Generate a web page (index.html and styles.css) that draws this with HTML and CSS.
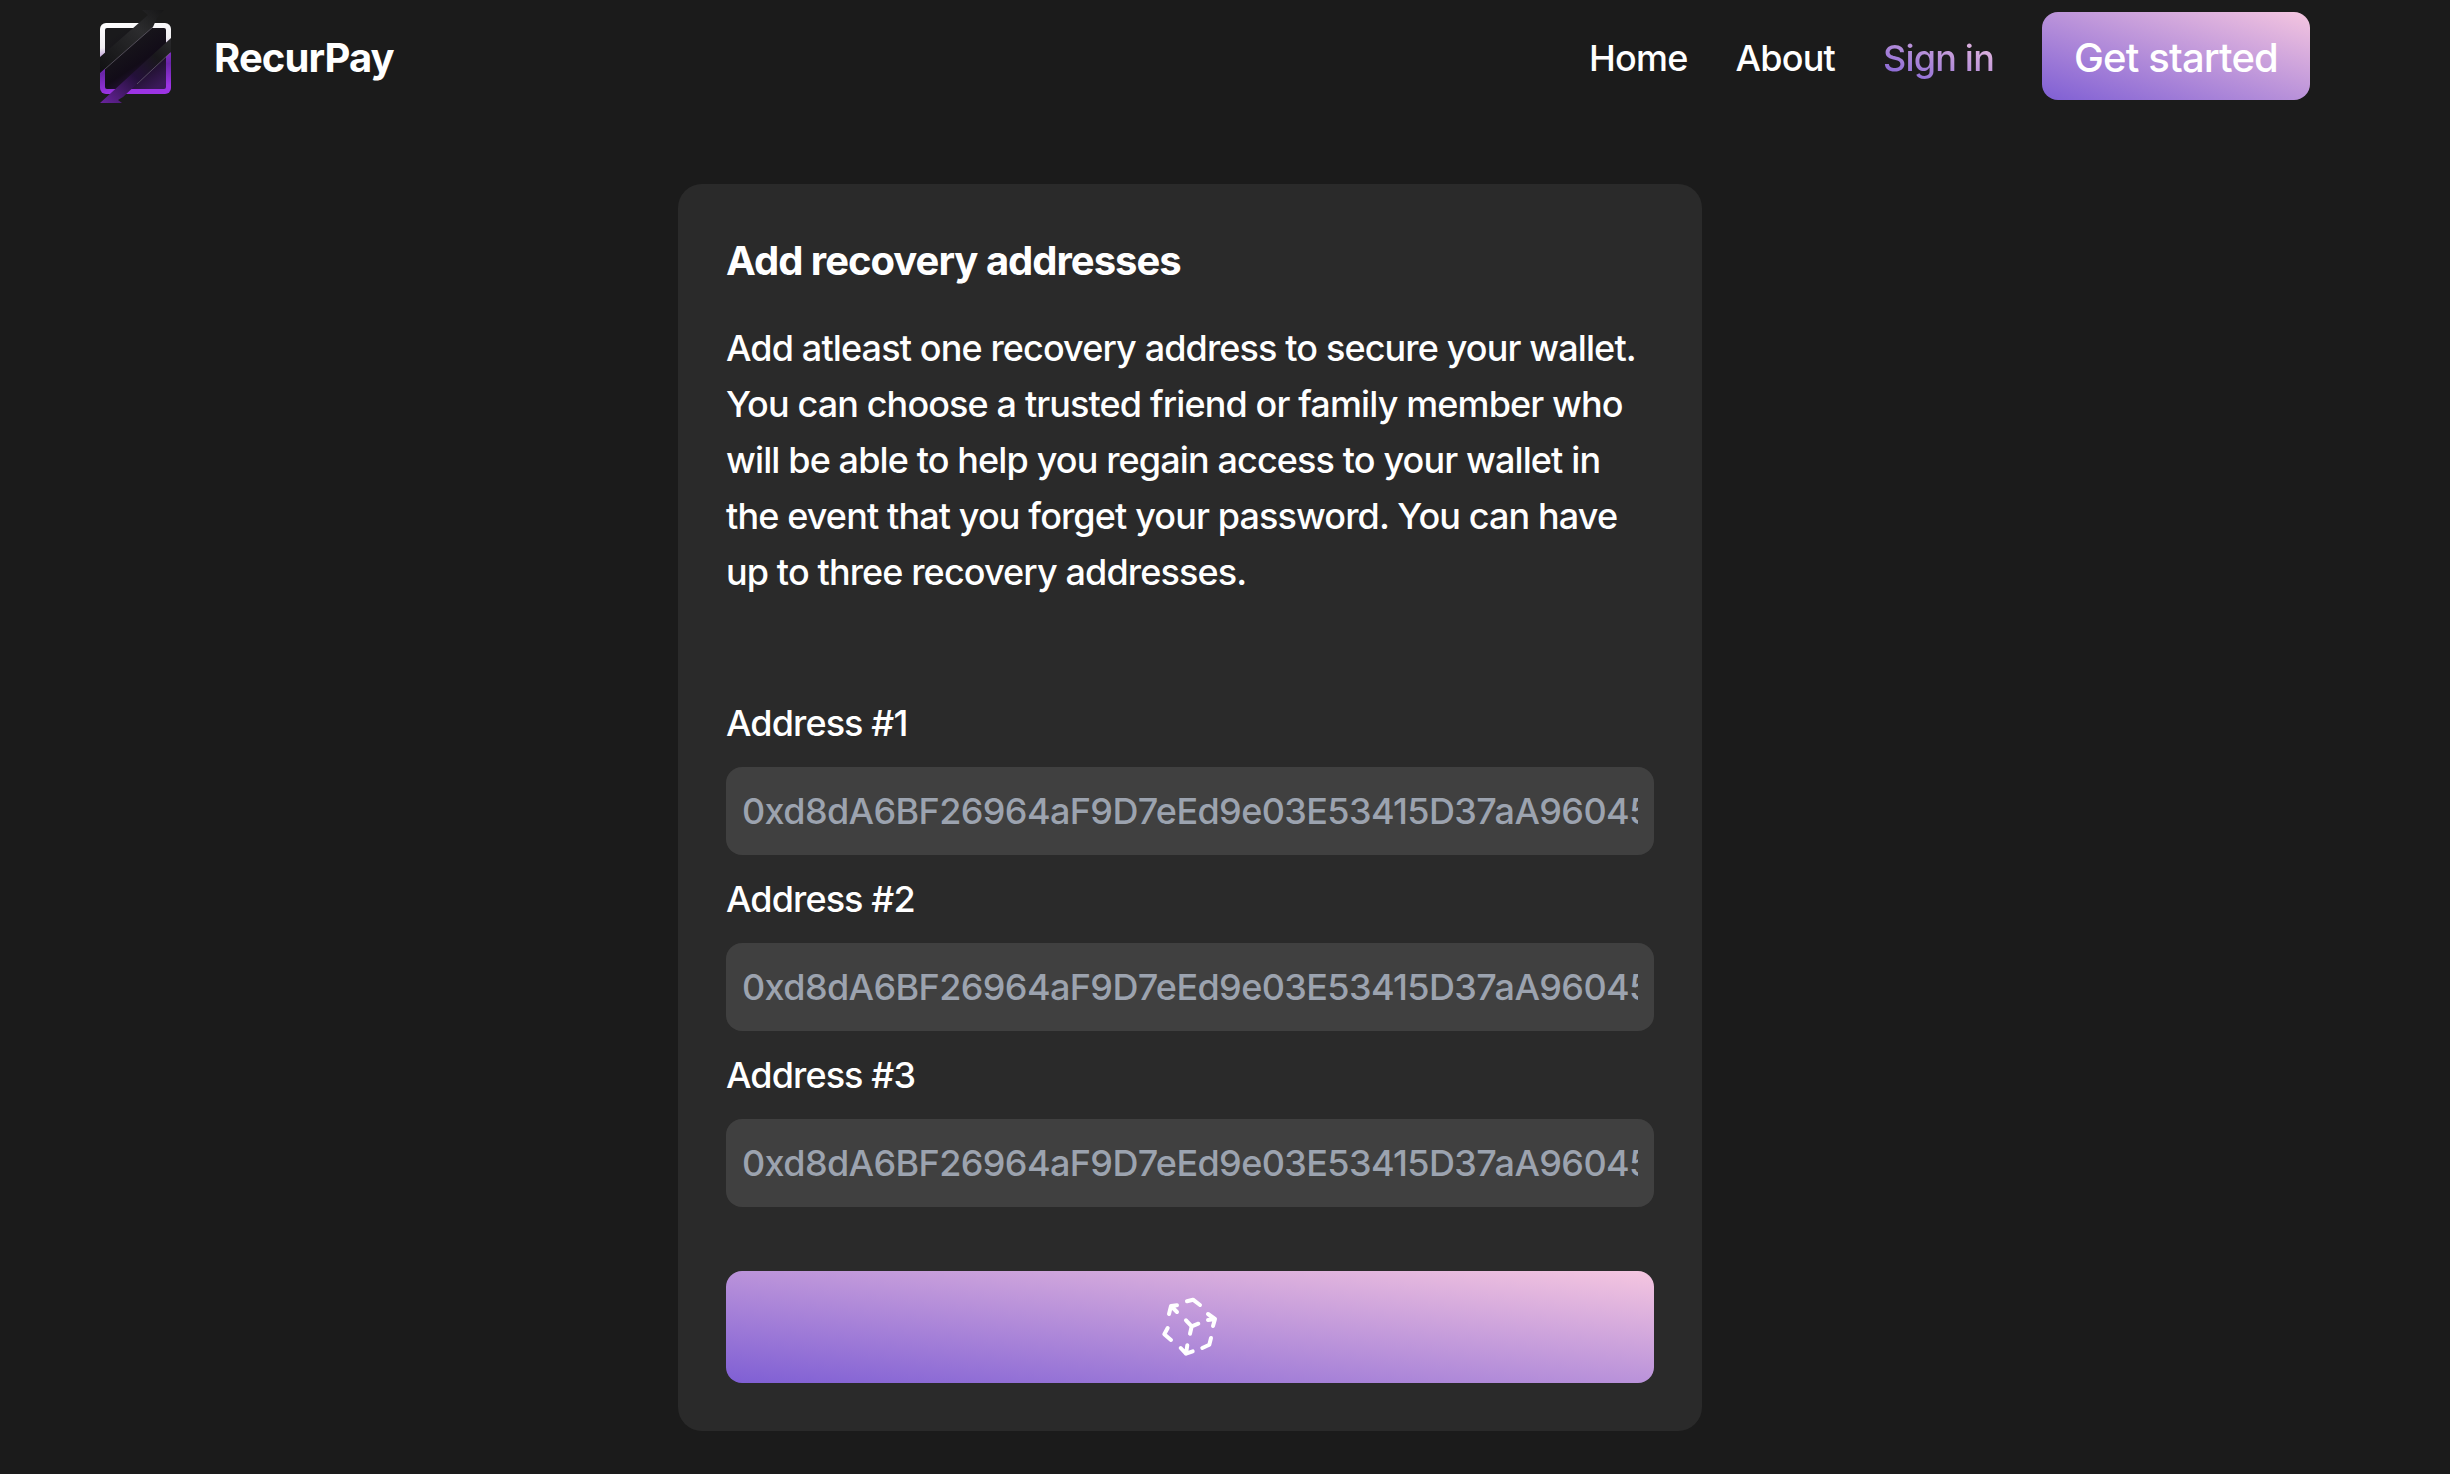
FILE: index.html
```html
<!DOCTYPE html>
<html lang="en">
<head>
    <meta charset="UTF-8">
    <meta name="viewport" content="width=device-width, initial-scale=1.0">
    <title>RecurPay</title>
    <link rel="stylesheet" href="styles.css">
</head>
<body>
    <header class="header">
        <a class="brand" href="#">
            <svg class="brand-logo" viewBox="0 0 72 95" width="72" height="95">
                <defs>
                    <linearGradient id="frame" x1="0" y1="0" x2="0.15" y2="1">
                        <stop offset="0" stop-color="#ffffff"/>
                        <stop offset="0.35" stop-color="#f0eef2"/>
                        <stop offset="0.47" stop-color="#c0a0d8"/>
                        <stop offset="0.55" stop-color="#7e2cc0"/>
                        <stop offset="0.7" stop-color="#6a26a8"/>
                        <stop offset="1" stop-color="#9c34e4"/>
                    </linearGradient>
                    <linearGradient id="inner" x1="0.2" y1="0.1" x2="0.8" y2="1">
                        <stop offset="0" stop-color="#1a1a1c"/>
                        <stop offset="0.55" stop-color="#120c18"/>
                        <stop offset="1" stop-color="#3a1a58"/>
                    </linearGradient>
                    <linearGradient id="band" x1="0" y1="1" x2="1" y2="0">
                        <stop offset="0" stop-color="#101012"/>
                        <stop offset="0.65" stop-color="#2c2c2e"/>
                        <stop offset="1" stop-color="#161617"/>
                    </linearGradient>
                    <linearGradient id="tail" x1="0" y1="1" x2="1" y2="0">
                        <stop offset="0" stop-color="#6a249f"/>
                        <stop offset="0.45" stop-color="#24103a"/>
                        <stop offset="0.75" stop-color="#19181b"/>
                        <stop offset="1" stop-color="#2a2a2c"/>
                    </linearGradient>
                </defs>
                <rect x="0" y="13" width="71" height="71" rx="6" fill="url(#frame)"/>
                <rect x="5" y="18" width="61" height="61" rx="2" fill="url(#inner)"/>
                <polygon points="71,28 71,42 23,87 18,90 22,93 0,93" fill="url(#tail)"/>
                <polygon points="42,0 64,0 57,8 53,17 0,63 0,47 48,5" fill="url(#band)"/>
                <path d="M53 17 L5 59 M70 43 L37 74" stroke="#77707f" stroke-width="0.6" fill="none"/>
            </svg>
            <span class="brand-name">RecurPay</span>
        </a>
        <nav class="nav">
            <a class="nav-link" href="#">Home</a>
            <a class="nav-link" href="#">About</a>
            <a class="nav-link nav-signin" href="#">Sign in</a>
            <a class="get-started" href="#">Get started</a>
        </nav>
    </header>

    <main class="page">
        <div class="container">
            <h2 class="card-title">Add recovery addresses</h2>
            <p class="card-text">Add atleast one recovery address to secure your wallet. You can choose a trusted friend or family member who will be able to help you regain access to your wallet in the event that you forget your password. You can have up to three recovery addresses.</p>

            <div class="form-group">
                <label for="address-1">Address #1</label>
                <input type="text" id="address-1" placeholder="0xd8dA6BF26964aF9D7eEd9e03E53415D37aA96045">
            </div>
            <div class="form-group">
                <label for="address-2">Address #2</label>
                <input type="text" id="address-2" placeholder="0xd8dA6BF26964aF9D7eEd9e03E53415D37aA96045">
            </div>
            <div class="form-group">
                <label for="address-3">Address #3</label>
                <input type="text" id="address-3" placeholder="0xd8dA6BF26964aF9D7eEd9e03E53415D37aA96045">
            </div>

            <button type="button" class="submit">
                <svg viewBox="0 0 60 60" width="60" height="60" fill="none" stroke="#fff" stroke-width="4" stroke-linecap="round" stroke-linejoin="round">
                    <path d="M27 4.3 L33 2.7 L40 8"/>
                    <path d="M9 17 L11 9 L17 8.3 M11 9 L17 15"/>
                    <path d="M48 17 L55 22 L53 29 M55 22 L48 23"/>
                    <path d="M7.7 31 L4.3 37.3 L11 43"/>
                    <path d="M51 41 L49.3 47.7 L42.3 51"/>
                    <path d="M20.7 51 L26 56.7 L32.7 54.3 M26 56.7 L27.3 48.3"/>
                    <path d="M26 23.3 L31.7 29.3 L38.3 26.7 M31.7 29.3 L30 36.7"/>
                </svg>
            </button>
        </div>
    </main>
</body>
</html>
```

FILE: styles.css
```css
body {
    font-family: 'Inter', sans-serif;
    background-color: #1b1b1b;
    color: #fff;
    margin: 0;
    padding: 0;
    overflow: hidden;
}
a {
    color: inherit;
    text-decoration: none;
}
.header {
    display: flex;
    align-items: flex-start;
    justify-content: space-between;
    padding: 10px 140px 0 100px;
    height: 174px;
    box-sizing: border-box;
}
.brand {
    display: flex;
    align-items: center;
    gap: 42px;
    height: 95px;
}
.brand-logo {
    display: block;
}
.brand-name {
    font-size: 40px;
    font-weight: 700;
    letter-spacing: -0.9px;
}
.nav {
    display: flex;
    align-items: center;
    gap: 48px;
    padding-top: 2px;
}
.nav-link {
    font-size: 36px;
    font-weight: 500;
    letter-spacing: -0.8px;
    padding-top: 3px;
}
.nav-signin {
    background: linear-gradient(to top right, #7f5fd4, #f5c6e0);
    -webkit-background-clip: text;
    background-clip: text;
    color: transparent;
}
.get-started {
    display: block;
    height: 88px;
    padding: 0 32px;
    line-height: 91px;
    font-size: 40px;
    font-weight: 500;
    letter-spacing: -0.85px;
    border-radius: 16px;
    background: linear-gradient(to top right, #7f5fd4, #f5c6e0);
}
.page {
    padding: 10px 70px 0 0;
}
.container {
    width: 1024px;
    margin: 0 auto;
    padding: 48px;
    box-sizing: border-box;
    background-color: #2a2a2a;
    border-radius: 24px;
}
.card-title {
    margin: 0;
    font-size: 40px;
    line-height: 58px;
    font-weight: 700;
    letter-spacing: -1px;
}
.card-text {
    margin: 30px 0 95px;
    font-size: 36px;
    line-height: 56px;
    font-weight: 500;
    letter-spacing: -0.88px;
}
.form-group {
    margin-bottom: 16px;
}
.form-group label {
    display: block;
    margin-bottom: 16px;
    font-size: 36px;
    line-height: 56px;
    font-weight: 500;
    letter-spacing: -0.9px;
}
.form-group input {
    display: block;
    width: 100%;
    height: 88px;
    padding: 0 16px;
    box-sizing: border-box;
    border: none;
    outline: none;
    border-radius: 16px;
    background-color: #404040;
    color: #fff;
    font-family: inherit;
    font-size: 36px;
    font-weight: 500;
    letter-spacing: -0.62px;
}
.form-group input::placeholder {
    color: #9ca3af;
    opacity: 1;
}
.submit {
    display: flex;
    align-items: center;
    justify-content: center;
    width: 100%;
    height: 112px;
    margin-top: 64px;
    padding: 0;
    border: none;
    border-radius: 16px;
    background: linear-gradient(to top right, #7f5fd4, #f5c6e0);
}
```
